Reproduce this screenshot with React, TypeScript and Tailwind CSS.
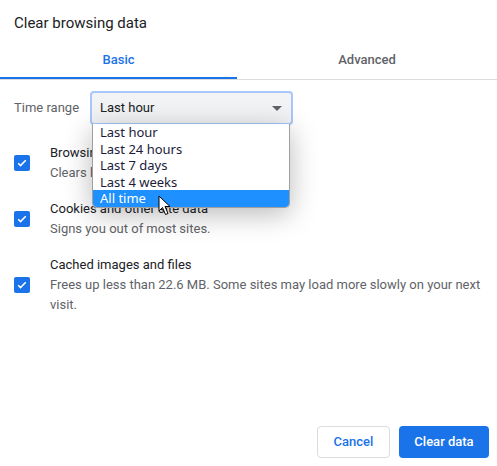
import { useState } from "react";

const ranges = ["Last hour", "Last 24 hours", "Last 7 days", "Last 4 weeks", "All time"];

const items = [
  { title: "Browsing history", desc: "Clears history from all synced devices." },
  { title: "Cookies and other site data", desc: "Signs you out of most sites." },
  {
    title: "Cached images and files",
    desc: "Frees up less than 22.6 MB. Some sites may load more slowly on your next visit.",
  },
];

function Check() {
  return (
    <div className="w-4 h-4 rounded-[2px] bg-[#1a73e8] flex items-center justify-center shrink-0">
      <svg width="12" height="12" viewBox="0 0 24 24" fill="none">
        <path d="M4.5 12.5l4.5 4.5 10.5-10.5" stroke="white" strokeWidth="3.2" />
      </svg>
    </div>
  );
}

function Cursor() {
  return (
    <svg width="14" height="21" viewBox="0 0 14 21" className="absolute left-[158px] top-[195px]">
      <path
        d="M1 1 L1 16 L4.5 12.5 L7.5 19.5 L10 18.5 L7 11.5 L12 11.5 Z"
        fill="white"
        stroke="black"
        strokeWidth="1"
        strokeLinejoin="round"
      />
    </svg>
  );
}

export default function App() {
  const [tab, setTab] = useState("basic");

  return (
    <div
      className="relative w-[497px] h-[466px] bg-white flex flex-col text-[#202124]"
      style={{ fontFamily: "Roboto, 'Liberation Sans', sans-serif" }}
    >
      <h1 className="px-[14px] pt-[12px] h-[42px] text-[15px] text-[#202124]">Clear browsing data</h1>

      <div className="flex border-b border-[#dadce0]">
        <button
          className={`w-[237px] h-[37px] text-[13px] font-medium border-b-2 ${
            tab === "basic" ? "text-[#1a73e8] border-[#1a73e8]" : "text-[#5f6368] border-transparent"
          }`}
          onClick={() => setTab("basic")}
        >
          Basic
        </button>
        <button
          className={`flex-1 h-[37px] text-[13px] font-medium border-b-2 ${
            tab === "advanced" ? "text-[#1a73e8] border-[#1a73e8]" : "text-[#5f6368] border-transparent"
          }`}
          onClick={() => setTab("advanced")}
        >
          Advanced
        </button>
      </div>

      <div className="flex items-center pl-[14px] pt-[11px]">
        <span className="w-[76px] text-[13px] text-[#5f6368]">Time range</span>
        <div className="w-[203px] h-[34px] rounded-[4px] border-2 border-[#a8c7fa] bg-[#f1f3f4] flex items-center justify-between pl-[8px] pr-[9px]">
          <span className="text-[13px] text-[#202124]">Last hour</span>
          <svg width="10" height="5" viewBox="0 0 10 5">
            <path d="M0 0h10L5 5z" fill="#5f6368" />
          </svg>
        </div>
      </div>

      <div className="flex flex-col pl-[14px] pr-[14px] pt-[18px] gap-[16px]">
        {items.map((it) => (
          <div key={it.title} className="flex items-center">
            <Check />
            <div className="ml-[20px] flex flex-col text-[13px] leading-[20px]">
              <span className="text-[#202124]">{it.title}</span>
              <span className="text-[#5f6368]">{it.desc}</span>
            </div>
          </div>
        ))}
      </div>

      <div className="mt-auto flex justify-end gap-[9px] pr-[8px] pb-[8px]">
        <button className="w-[73px] h-[32px] rounded-[4px] border border-[#dadce0] text-[13px] font-medium text-[#1a73e8] bg-white">
          Cancel
        </button>
        <button className="w-[90px] h-[32px] rounded-[4px] bg-[#1a73e8] text-[13px] font-medium text-white">
          Clear data
        </button>
      </div>

      <ul
        className="absolute left-[92px] top-[124px] w-[198px] bg-white border border-t-0 border-[#a0a0a0] rounded-b-[5px] overflow-hidden shadow-[0_6px_28px_rgba(0,0,0,0.28)] text-[13px] leading-[16.5px] text-[#1b1b3a]"
        style={{ fontFamily: "'Noto Sans', 'Open Sans', sans-serif" }}
      >
        {ranges.map((r) => (
          <li key={r} className={`pl-[7px] ${r === "All time" ? "bg-[#1e90ff] text-white" : ""}`}>
            {r}
          </li>
        ))}
      </ul>

      <Cursor />
    </div>
  );
}
